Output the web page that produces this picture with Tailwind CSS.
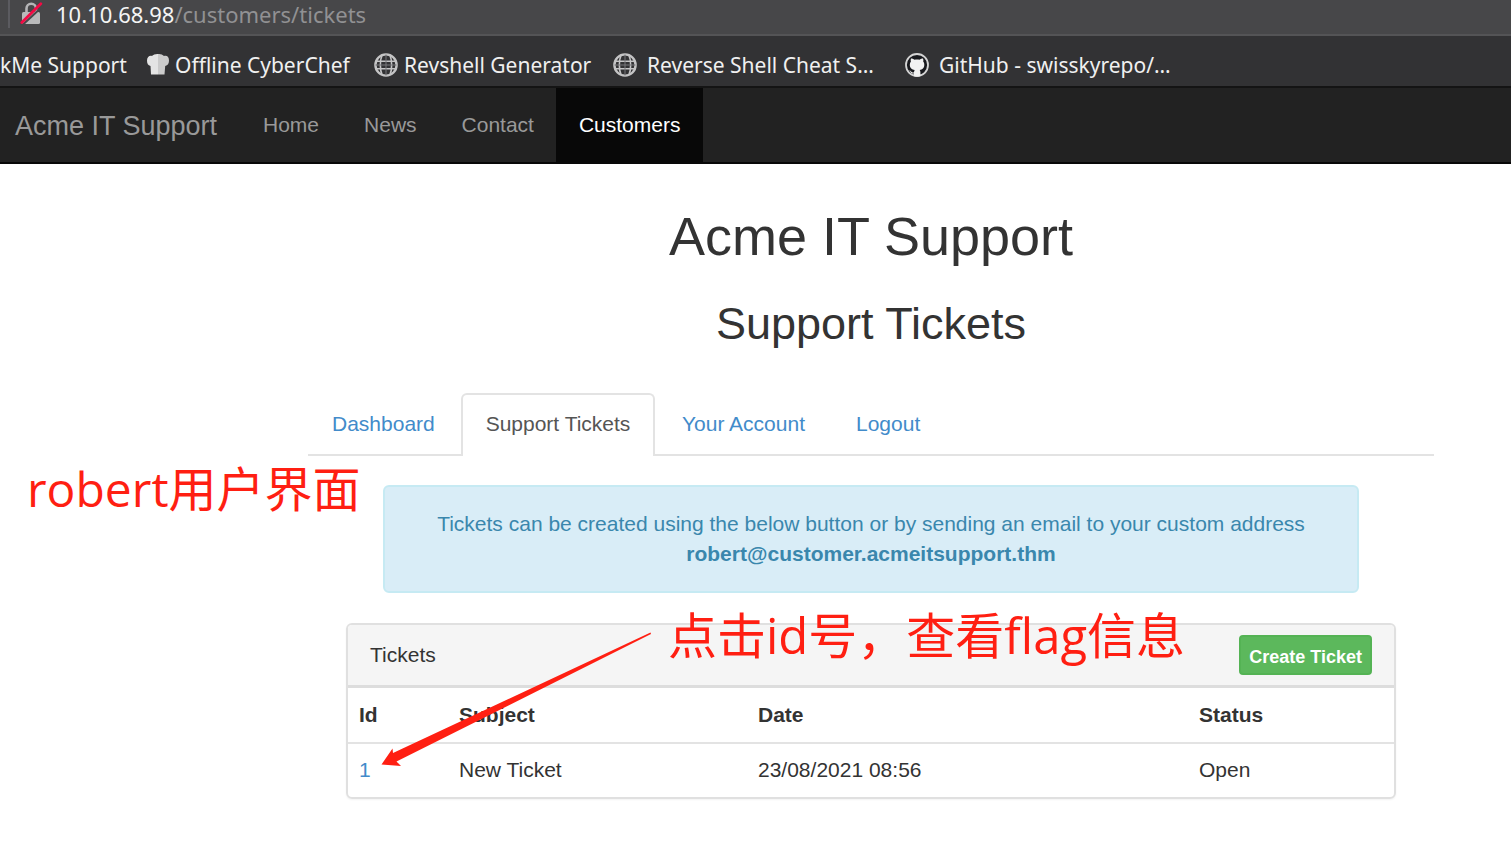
<!DOCTYPE html>
<html lang="en">
<head>
<meta charset="utf-8">
<title>Acme IT Support - Support Tickets</title>
<script src="https://cdn.jsdelivr.net/npm/@tailwindcss/browser@4"></script>
</head>
<body class="relative min-h-screen overflow-x-hidden bg-white font-['Liberation_Sans',Arial,sans-serif] text-[21px] leading-[30px] text-[#333]">

<svg class="hidden" aria-hidden="true">
  <symbol id="globe" viewBox="0 0 24 24">
    <g fill="none" stroke="#c4c4c5">
      <circle cx="12" cy="12" r="10.600" stroke-width="2.400"/>
      <path d="M8 2.500C5.800 7 5.800 17 8 21.500M16 2.500c2.200 4.500 2.200 14.500 0 19M2.500 8.300h19M2.500 15.700h19" stroke-width="1.600"/>
      <path d="M12 1.500v21M1.500 12h21" stroke-width="1" stroke="#77777a"/>
    </g>
  </symbol>
</svg>

<div class="flex h-9 items-start border-b-2 border-[#545456] bg-[#474749] font-['Noto_Sans',sans-serif] text-[22px] leading-7 text-[#919193]">
  <div class="ml-2 h-7 w-[2px] bg-[#5b5b60]"></div>
  <svg class="ml-2.5 h-7 w-6" viewBox="0 0 24 28" aria-hidden="true">
    <path d="M6.500 12V8.500a4.600 4.600 0 0 1 9.500 0V12" fill="none" stroke="#b5b5b7" stroke-width="2.600"/>
    <rect x="2" y="12" width="18" height="12" rx="1.500" fill="#b9b9ba"/>
    <path d="M2.500 25 23 6" stroke="#474749" stroke-width="2"/>
    <path d="M1.800 22.500 20.800 3.800" stroke="#f20a44" stroke-width="2.800" stroke-linecap="round"/>
  </svg>
  <div class="ml-3"><span class="text-[#f5f5f5]">10.10.68.98</span>/customers/tickets</div>
</div>

<nav aria-label="Bookmarks" class="flex h-[52px] items-center overflow-hidden whitespace-nowrap border-b-2 border-[#141414] bg-[#323234] pt-2 font-['Noto_Sans',sans-serif] text-[21px] leading-7 text-[#f0f0f0]">
  <a href="#" class="w-[147px] shrink-0">kMe Support</a>
  <a href="#" class="flex w-[227px] shrink-0 items-center gap-1">
    <svg class="size-6" viewBox="0 0 24 24" aria-hidden="true">
      <path d="M4 21.500 3.500 13C1 12.500 0 10.500 0 7.500 0 4 2.500 2.200 5 3 6 1.500 9 .8 11 1v20.500z" fill="#e4e4e4"/>
      <path d="M11 1c2.500-.3 4.500.5 6 2 3-1 5 1 5 4.500 0 3-1.200 5-3.800 5.500L17.500 21.500H11z" fill="#cbcbcb"/>
    </svg>Offline CyberChef</a>
  <a href="#" class="flex w-[239px] shrink-0 items-center gap-1.5"><svg class="size-6" aria-hidden="true"><use href="#globe"/></svg>Revshell Generator</a>
  <a href="#" class="flex w-[292px] shrink-0 items-center gap-2.5"><svg class="size-6" aria-hidden="true"><use href="#globe"/></svg>Reverse Shell Cheat S…</a>
  <a href="#" class="flex shrink-0 items-center gap-2.5">
    <svg class="size-6" viewBox="0 0 24 24" aria-hidden="true">
      <circle cx="12" cy="12" r="11" fill="#18191d" stroke="#d4d4d4" stroke-width="1.800"/>
      <path d="M6 5.500c1.500 0 2.700.7 3.500 1.200 1.600-.4 3.400-.4 5 0 .8-.5 2-1.200 3.500-1.200.5 1 .5 2 .2 3 .8 1 1.100 2 1.100 3.200 0 3.500-2 4.900-4.600 5.300.5.600.7 1.300.7 2.200V23c-2 .7-4.600.7-6.500 0v-2.500c-2.400.4-3-.9-3.700-2.100l-1-1c1.700-.2 2 1.700 3.300 2 .6.100 1 0 1.500-.2.100-.9.300-1.600.7-2.200-2.700-.4-4.900-1.800-4.900-5.300 0-1.200.4-2.300 1.100-3.200-.4-1-.300-2 .1-3z" fill="#f2f2f2"/>
    </svg>GitHub - swisskyrepo/…</a>
</nav>

<nav aria-label="Main" class="flex h-[76px] items-stretch border-b-2 border-[#080808] bg-[#222] text-[#999]">
  <a href="#" class="flex w-60 items-center pl-[15px] pt-0.5 text-[27px]">Acme IT Support</a>
  <a href="#" class="flex items-center pl-[23px] pr-[22px]">Home</a>
  <a href="#" class="flex items-center pl-[23px] pr-[22px]">News</a>
  <a href="#" class="flex items-center pl-[23px] pr-[22px]">Contact</a>
  <a href="#" aria-current="page" class="flex items-center bg-[#080808] px-[23px] text-white">Customers</a>
</nav>

<main class="pl-[308px] pr-[77px]">
  <h1 class="pt-[42px] text-center text-[54px] leading-[60px]">Acme IT Support</h1>
  <h2 class="pt-7 text-center text-[45px] leading-[60px]">Support Tickets</h2>

  <div class="mt-[39px] flex h-[63px] border-b-2 border-[#e3e3e3] text-[#428bca]">
    <a href="#" class="w-[153px] py-4 pl-6">Dashboard</a>
    <a href="#" aria-current="page" class="-mb-0.5 w-[194px] rounded-t-md border-2 border-b-0 border-[#e3e3e3] bg-white py-3.5 text-center text-[#555]">Support Tickets</a>
    <a href="#" class="ml-[3px] px-6 py-4">Your Account</a>
    <a href="#" class="ml-[3px] px-6 py-4">Logout</a>
  </div>

  <div class="mx-[75px] mt-[29px] rounded-md border-2 border-[#c6eaf3] bg-[#d9edf7] px-6 py-[22px] text-center text-[#3a87ad]">
    Tickets can be created using the below button or by sending an email to your custom address
    <strong class="block">robert@customer.acmeitsupport.thm</strong>
  </div>

  <section class="mx-[38px] mt-[30px] overflow-hidden rounded-md border-2 border-[#e0e0e0] shadow-xs">
    <div class="flex h-[60px] items-center justify-between bg-[#f5f5f5] px-[22px]">
      <span>Tickets</span>
      <button type="button" class="h-10 rounded-[4px] border-2 border-[#54b354] bg-[#5cb85c] px-2 pt-1 text-[18px] leading-6 font-bold text-white">Create Ticket</button>
    </div>
    <table class="w-full table-fixed text-left">
      <thead>
        <tr class="h-[56px] border-t-3 border-[#ddd]">
          <th class="w-[100px] pl-[11px]">Id</th>
          <th class="w-[299px] pl-[11px]">Subject</th>
          <th class="pl-[11px]">Date</th>
          <th class="w-[206px] pl-[11px]">Status</th>
        </tr>
      </thead>
      <tbody>
        <tr class="h-[54px] border-t-2 border-[#e3e3e3]">
          <td class="pl-[11px]"><a href="#" class="text-[#428bca]">1</a></td>
          <td class="pl-[11px]">New Ticket</td>
          <td class="pl-[11px]">23/08/2021 08:56</td>
          <td class="pl-[11px]">Open</td>
        </tr>
      </tbody>
    </table>
  </section>
</main>

<!-- Notes laid over the page -->
<p class="absolute left-[27px] top-[454px] whitespace-nowrap font-['Open_Sans','Noto_Sans_CJK_SC',sans-serif] text-[48px] leading-[70px] text-[#ff1f12]">robert用户界面</p>
<p class="absolute left-[668px] top-[600px] whitespace-nowrap font-['Open_Sans','Noto_Sans_CJK_SC',sans-serif] text-[49px] leading-[70px] text-[#ff1f12]">点击id号，查看flag信息</p>
<svg class="pointer-events-none absolute left-[380px] top-[630px] h-[140px] w-[275px]" viewBox="0 0 275 140" aria-hidden="true">
  <path d="M270.500 2.500 271 4 16.500 131.500 21 136 1.500 134.500 12.500 118.500 13 123z" fill="#ff1f12"/>
</svg>
</body>
</html>
